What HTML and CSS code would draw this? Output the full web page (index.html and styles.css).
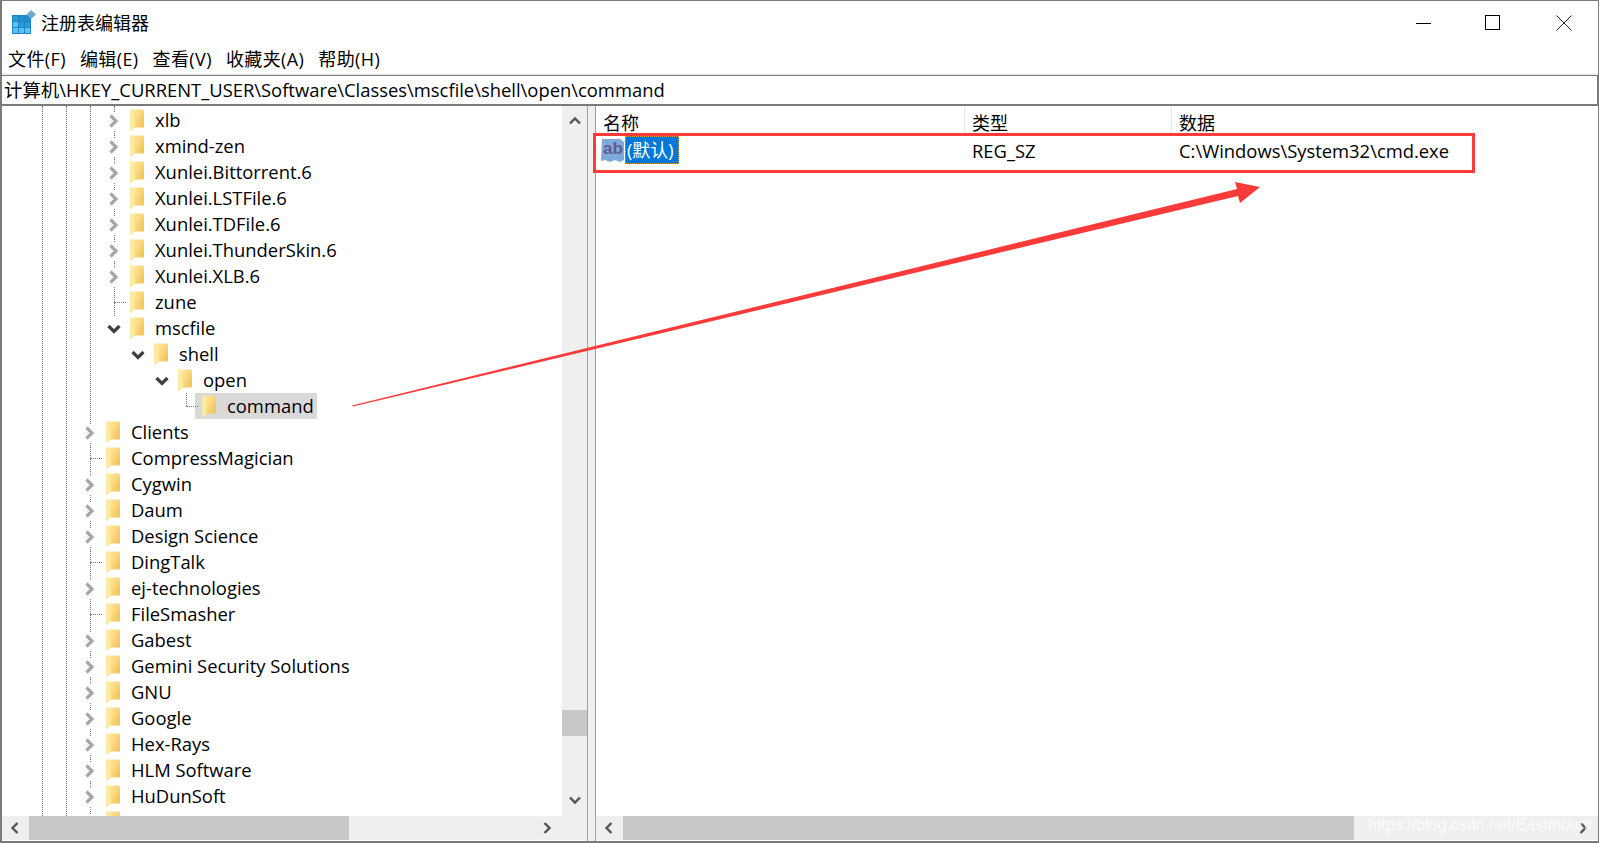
FILE: index.html
```html
<!DOCTYPE html>
<html lang="zh-CN">

<head>
    <meta charset="UTF-8" />
    <title>注册表编辑器</title>
    <link rel="stylesheet" href="styles.css">
</head>

<body>
    <svg class="defs" width="0" height="0">
        <defs>
            <linearGradient id="folder-front" x1="0" y1="0" x2="1" y2="0.6">
                <stop offset="0" stop-color="#fdeaa8" />
                <stop offset="0.5" stop-color="#fbdc86" />
                <stop offset="1" stop-color="#f3c65a" />
            </linearGradient>
            <symbol id="folder" viewBox="0 0 14 22">
                <path d="M0 0.5 H13 L14 2 V18.5 H4.5 L1 22 L0 21 Z" fill="url(#folder-front)" />
                <path d="M0 0.5 L4.5 1 V18.5 L1 22 L0 21 Z" fill="#fde9a6" />
            </symbol>
            <symbol id="right" viewBox="0 0 18 18">
                <path d="M5.5 3.5 L11 9 L5.5 14.5" fill="none" stroke="#a6a6a6" stroke-width="3.2" />
            </symbol>
            <symbol id="down" viewBox="0 0 18 18">
                <path d="M3.5 6 L9 11.5 L14.5 6" fill="none" stroke="#404040" stroke-width="3.2" />
            </symbol>
            <symbol id="sb-left" viewBox="0 0 14 14">
                <path d="M9.5 2 L4.5 7 L9.5 12" fill="none" stroke="#555" stroke-width="2.4" />
            </symbol>
            <symbol id="sb-right" viewBox="0 0 14 14">
                <path d="M4.5 2 L9.5 7 L4.5 12" fill="none" stroke="#555" stroke-width="2.4" />
            </symbol>
            <symbol id="sb-up" viewBox="0 0 14 14">
                <path d="M2 9.5 L7 4.5 L12 9.5" fill="none" stroke="#555" stroke-width="2.4" />
            </symbol>
            <symbol id="sb-down" viewBox="0 0 14 14">
                <path d="M2 4.5 L7 9.5 L12 4.5" fill="none" stroke="#555" stroke-width="2.4" />
            </symbol>
        </defs>
    </svg>

    <div class="window">
        <header class="titlebar">
            <svg class="app-icon" width="24" height="26" viewBox="0 0 24 26">
                <rect x="0" y="6" width="19" height="19" fill="#1b86c9" />
                <g fill="#5cc0f0">
                    <rect x="1" y="7" width="5" height="5" fill="#2b9ad8" />
                    <rect x="7" y="7" width="5" height="5" fill="#1f8fd0" />
                    <rect x="13" y="7" width="5" height="5" fill="#1f8fd0" />
                    <rect x="1" y="13" width="5" height="5" />
                    <rect x="7" y="13" width="5" height="5" fill="#2b9ad8" />
                    <rect x="13" y="13" width="5" height="5" fill="#2b9ad8" />
                    <rect x="1" y="19" width="5" height="5" />
                    <rect x="7" y="19" width="5" height="5" />
                    <rect x="13" y="19" width="5" height="5" />
                </g>
                <path d="M19 1 L24 5.5 L19 10 L14.5 5.5 Z" fill="#6fa9d0" />
            </svg>
            <span class="title">注册表编辑器</span>
            <div class="win-buttons">
                <svg width="16" height="16" viewBox="0 0 16 16"><path d="M0 8.5 H15" stroke="#000" /></svg>
                <svg width="16" height="16" viewBox="0 0 16 16"><rect x="0.5" y="0.5" width="14" height="14" fill="none" stroke="#000" /></svg>
                <svg class="close" width="16" height="16" viewBox="0 0 16 16"><path d="M0.5 0.5 L15.5 15.5 M15.5 0.5 L0.5 15.5" stroke="#222" /></svg>
            </div>
        </header>

        <nav class="menubar">
            <span>文件(F)</span>
            <span>编辑(E)</span>
            <span>查看(V)</span>
            <span>收藏夹(A)</span>
            <span>帮助(H)</span>
        </nav>

        <div class="pathbar">计算机\HKEY_CURRENT_USER\Software\Classes\mscfile\shell\open\command</div>

        <main class="panes">
            <section class="tree-pane">
                <div class="tree-main">
                    <div class="tree">
                        <i class="guide g1"></i>
                        <i class="guide g2"></i>
                        <i class="guide g3"></i>
                        <i class="guide g4"></i>

                        <div class="row lv2"><svg class="chev"><use href="#right" /></svg><div class="item"><svg class="folder"><use href="#folder" /></svg><span>xlb</span></div></div>
                        <div class="row lv2"><svg class="chev"><use href="#right" /></svg><div class="item"><svg class="folder"><use href="#folder" /></svg><span>xmind-zen</span></div></div>
                        <div class="row lv2"><svg class="chev"><use href="#right" /></svg><div class="item"><svg class="folder"><use href="#folder" /></svg><span>Xunlei.Bittorrent.6</span></div></div>
                        <div class="row lv2"><svg class="chev"><use href="#right" /></svg><div class="item"><svg class="folder"><use href="#folder" /></svg><span>Xunlei.LSTFile.6</span></div></div>
                        <div class="row lv2"><svg class="chev"><use href="#right" /></svg><div class="item"><svg class="folder"><use href="#folder" /></svg><span>Xunlei.TDFile.6</span></div></div>
                        <div class="row lv2"><svg class="chev"><use href="#right" /></svg><div class="item"><svg class="folder"><use href="#folder" /></svg><span>Xunlei.ThunderSkin.6</span></div></div>
                        <div class="row lv2"><svg class="chev"><use href="#right" /></svg><div class="item"><svg class="folder"><use href="#folder" /></svg><span>Xunlei.XLB.6</span></div></div>
                        <div class="row lv2"><b class="leaf"></b><div class="item"><svg class="folder"><use href="#folder" /></svg><span>zune</span></div></div>
                        <div class="row lv2"><svg class="chev"><use href="#down" /></svg><div class="item"><svg class="folder"><use href="#folder" /></svg><span>mscfile</span></div></div>
                        <div class="row lv3"><svg class="chev"><use href="#down" /></svg><div class="item"><svg class="folder"><use href="#folder" /></svg><span>shell</span></div></div>
                        <div class="row lv4"><svg class="chev"><use href="#down" /></svg><div class="item"><svg class="folder"><use href="#folder" /></svg><span>open</span></div></div>
                        <div class="row lv5"><b class="leaf last"></b><div class="item selected"><svg class="folder"><use href="#folder" /></svg><span>command</span></div></div>
                        <div class="row"><svg class="chev"><use href="#right" /></svg><div class="item"><svg class="folder"><use href="#folder" /></svg><span>Clients</span></div></div>
                        <div class="row"><b class="leaf"></b><div class="item"><svg class="folder"><use href="#folder" /></svg><span>CompressMagician</span></div></div>
                        <div class="row"><svg class="chev"><use href="#right" /></svg><div class="item"><svg class="folder"><use href="#folder" /></svg><span>Cygwin</span></div></div>
                        <div class="row"><svg class="chev"><use href="#right" /></svg><div class="item"><svg class="folder"><use href="#folder" /></svg><span>Daum</span></div></div>
                        <div class="row"><svg class="chev"><use href="#right" /></svg><div class="item"><svg class="folder"><use href="#folder" /></svg><span>Design Science</span></div></div>
                        <div class="row"><b class="leaf"></b><div class="item"><svg class="folder"><use href="#folder" /></svg><span>DingTalk</span></div></div>
                        <div class="row"><svg class="chev"><use href="#right" /></svg><div class="item"><svg class="folder"><use href="#folder" /></svg><span>ej-technologies</span></div></div>
                        <div class="row"><b class="leaf"></b><div class="item"><svg class="folder"><use href="#folder" /></svg><span>FileSmasher</span></div></div>
                        <div class="row"><svg class="chev"><use href="#right" /></svg><div class="item"><svg class="folder"><use href="#folder" /></svg><span>Gabest</span></div></div>
                        <div class="row"><svg class="chev"><use href="#right" /></svg><div class="item"><svg class="folder"><use href="#folder" /></svg><span>Gemini Security Solutions</span></div></div>
                        <div class="row"><svg class="chev"><use href="#right" /></svg><div class="item"><svg class="folder"><use href="#folder" /></svg><span>GNU</span></div></div>
                        <div class="row"><svg class="chev"><use href="#right" /></svg><div class="item"><svg class="folder"><use href="#folder" /></svg><span>Google</span></div></div>
                        <div class="row"><svg class="chev"><use href="#right" /></svg><div class="item"><svg class="folder"><use href="#folder" /></svg><span>Hex-Rays</span></div></div>
                        <div class="row"><svg class="chev"><use href="#right" /></svg><div class="item"><svg class="folder"><use href="#folder" /></svg><span>HLM Software</span></div></div>
                        <div class="row"><svg class="chev"><use href="#right" /></svg><div class="item"><svg class="folder"><use href="#folder" /></svg><span>HuDunSoft</span></div></div>
                        <div class="row"><svg class="chev"><use href="#right" /></svg><div class="item"><svg class="folder"><use href="#folder" /></svg></div></div>
                    </div>
                    <div class="vscroll">
                        <svg class="sb-arrow"><use href="#sb-up" /></svg>
                        <div class="vtrack"><div class="vthumb"></div></div>
                        <svg class="sb-arrow"><use href="#sb-down" /></svg>
                    </div>
                </div>
                <div class="hscroll">
                    <svg class="sb-arrow"><use href="#sb-left" /></svg>
                    <div class="htrack"><div class="hthumb tree-thumb"></div></div>
                    <svg class="sb-arrow"><use href="#sb-right" /></svg>
                </div>
            </section>

            <div class="splitter"></div>

            <section class="list-pane">
                <div class="list-main">
                    <div class="list-head">
                        <div class="col col-name">名称</div>
                        <div class="col col-type">类型</div>
                        <div class="col col-data">数据</div>
                    </div>
                    <div class="list-row">
                        <div class="col col-name">
                            <div class="ab-icon">
                                <svg class="ab-blob" width="24" height="25" viewBox="0 0 24 25">
                                    <path d="M1 1 H19 L23 4 V22 L19 24 L14 22 L9 24 L4 22 L0 23 Z" fill="#7fa8dc" />
                                </svg>
                                <span>ab</span>
                            </div>
                            <div class="value-name">(默认)</div>
                        </div>
                        <div class="col col-type">REG_SZ</div>
                        <div class="col col-data">C:\Windows\System32\cmd.exe</div>
                    </div>
                </div>
                <div class="hscroll">
                    <svg class="sb-arrow"><use href="#sb-left" /></svg>
                    <div class="htrack"><div class="hthumb list-thumb"></div></div>
                    <svg class="sb-arrow"><use href="#sb-right" /></svg>
                </div>
            </section>
        </main>

        <!-- annotation drawn over the screenshot -->
        <div class="red-box"></div>
        <svg class="arrow" width="1599" height="843" viewBox="0 0 1599 843">
            <path d="M352 405.5 L1237 189 L1235 182 L1260 187 L1240 203 L1238 196 L353 406.5 Z" fill="#fb3a3a" />
        </svg>
        <div class="watermark">https://blog.csdn.net/Eastmount</div>
    </div>
</body>

</html>
```

FILE: styles.css
```css
html,
body {
    margin: 0;
    padding: 0;
    height: 100%;
    overflow: hidden;
    background: #ffffff;
}

body {
    font-family: 'Open Sans', 'Noto Sans CJK SC', sans-serif;
    font-size: 18.4px;
    color: #000000;
}

.defs {
    position: absolute;
}

.window {
    position: relative;
    width: 1599px;
    height: 843px;
    box-sizing: border-box;
    border: 1px solid #7a7a7a;
    border-width: 1px 1px 2px 2px;
    display: flex;
    flex-direction: column;
    overflow: hidden;
    background: #ffffff;
}

/* title bar */
.titlebar {
    height: 42px;
    display: flex;
    align-items: center;
    padding-left: 10px;
    flex-shrink: 0;
}

.app-icon {
    margin-right: 5px;
}

.title {
    font-family: 'Noto Sans CJK SC', sans-serif;
    font-size: 18px;
}

.win-buttons {
    margin-left: auto;
    display: flex;
    gap: 53px;
    padding: 1px 26px 0 0;
}

.win-buttons .close {
    margin-left: 2px;
}

.menubar {
    height: 30px;
    display: flex;
    align-items: center;
    gap: 14px;
    padding-left: 6px;
    font-size: 18px;
    letter-spacing: 0.4px;
    flex-shrink: 0;
}

.pathbar {
    height: 28px;
    line-height: 28px;
    margin-top: 2px;
    padding-left: 2px;
    border: 1px solid #7a7a7a;
    border-left: 0;
    flex-shrink: 0;
    white-space: nowrap;
    box-shadow: 0 -2px 0 #efefef;
}

/* panes */
.panes {
    flex: 1;
    display: flex;
    min-height: 0;
    border-top: 1px solid #7a7a7a;
}

.tree-pane {
    width: 585px;
    display: flex;
    flex-direction: column;
    flex-shrink: 0;
    border-right: 1px solid #a0a0a0;
}

.tree-main {
    flex: 1;
    display: flex;
    min-height: 0;
}

.tree {
    position: relative;
    flex: 1;
    overflow: hidden;
    padding-top: 1px;
}

.guide {
    position: absolute;
    top: 0;
    bottom: 0;
    width: 0;
    border-left: 1px dotted #777777;
}

.g1 {
    left: 40px;
}

.g2 {
    left: 64px;
}

.g3 {
    left: 88px;
}

.g4 {
    left: 112px;
    height: 210px;
    bottom: auto;
}

.row {
    position: relative;
    height: 26px;
    display: flex;
    align-items: center;
    padding-left: 79px;
    white-space: nowrap;
}

.lv2 {
    padding-left: 103px;
}

.lv3 {
    padding-left: 127px;
}

.lv4 {
    padding-left: 151px;
}

.lv5 {
    padding-left: 175px;
}

.chev {
    width: 18px;
    height: 18px;
    margin-top: 2px;
    flex-shrink: 0;
    background: #ffffff;
}

.leaf {
    position: relative;
    width: 18px;
    height: 26px;
    flex-shrink: 0;
}

.leaf::after {
    content: "";
    position: absolute;
    left: 9px;
    top: 13px;
    width: 12px;
    border-top: 1px dotted #777777;
}

.leaf.last::before {
    content: "";
    position: absolute;
    left: 9px;
    top: 0;
    height: 13px;
    border-left: 1px dotted #777777;
}

.item {
    display: flex;
    align-items: center;
    height: 26px;
    padding: 0 3px 0 7px;
}

.item span {
    margin: -2px 0 0 11px;
}

.selected {
    background: #d9d9d9;
}

.folder {
    width: 14px;
    height: 22px;
    flex-shrink: 0;
}

/* scrollbars */
.vscroll {
    width: 25px;
    background: #efefef;
    display: flex;
    flex-direction: column;
    align-items: center;
    flex-shrink: 0;
}

.vtrack {
    flex: 1;
    width: 100%;
    padding-top: 573px;
    box-sizing: border-box;
}

.vthumb {
    height: 26px;
    background: #c8c8c8;
}

.sb-arrow {
    width: 14px;
    height: 14px;
    flex-shrink: 0;
    margin: 8px 5px 9px;
}

.hscroll {
    height: 24px;
    margin-bottom: 1px;
    background: #efefef;
    display: flex;
    align-items: center;
    flex-shrink: 0;
}

.hscroll .sb-arrow {
    margin: 0 7px 0 6px;
}

.hscroll .sb-arrow:last-child {
    margin: 0 8px 0 4px;
}

.tree-pane .hscroll .sb-arrow:last-child {
    margin-right: 33px;
}

.htrack {
    flex: 1;
    height: 100%;
}

.hthumb {
    height: 100%;
    background: #c8c8c8;
}

.tree-thumb {
    width: 320px;
}

.list-thumb {
    width: 731px;
}

.splitter {
    width: 7px;
    flex-shrink: 0;
    background: #f0f0f0;
    border-right: 1px solid #a0a0a0;
}

.list-pane {
    flex: 1;
    display: flex;
    flex-direction: column;
    min-width: 0;
}

.list-main {
    flex: 1;
}

.list-head,
.list-row {
    display: flex;
    align-items: center;
}

.list-head {
    height: 30px;
    padding-top: 2px;
    box-sizing: border-box;
}

.list-row {
    height: 28px;
}

.col {
    box-sizing: border-box;
    padding-left: 7px;
    height: 100%;
    display: flex;
    align-items: center;
    flex-shrink: 0;
}

.col-name {
    width: 369px;
}

.col-type {
    width: 207px;
}

.list-head .col {
    border-right: 1px solid #e5e5e5;
    font-family: 'Noto Sans CJK SC', sans-serif;
    font-size: 18px;
}

.list-head .col-data {
    border-right: 0;
}

.list-row .col-name {
    padding-left: 5px;
}

.ab-icon {
    position: relative;
    width: 24px;
    height: 25px;
    color: #5f5d8f;
    font-family: 'Liberation Sans', sans-serif;
    font-size: 17px;
    font-weight: bold;
    line-height: 22px;
    text-align: center;
}

.ab-blob {
    position: absolute;
    left: 0;
    top: 0;
}

.ab-icon span {
    position: relative;
}

.value-name {
    height: 28px;
    line-height: 28px;
    padding: 0 5px 0 2px;
    background: #0078d7;
    color: #ffffff;
    outline: 1px dotted #e0a030;
    outline-offset: -1px;
    font-size: 18px;
}

/* annotations */
.red-box {
    position: absolute;
    left: 591px;
    top: 132px;
    width: 876px;
    height: 34px;
    border: 3px solid #fb3a3a;
}

.arrow {
    position: absolute;
    left: -2px;
    top: -1px;
    pointer-events: none;
}

.watermark {
    position: absolute;
    left: 1366px;
    top: 815px;
    color: rgba(255, 255, 255, 0.75);
    font-family: 'Liberation Sans', sans-serif;
    font-size: 16px;
}
```
